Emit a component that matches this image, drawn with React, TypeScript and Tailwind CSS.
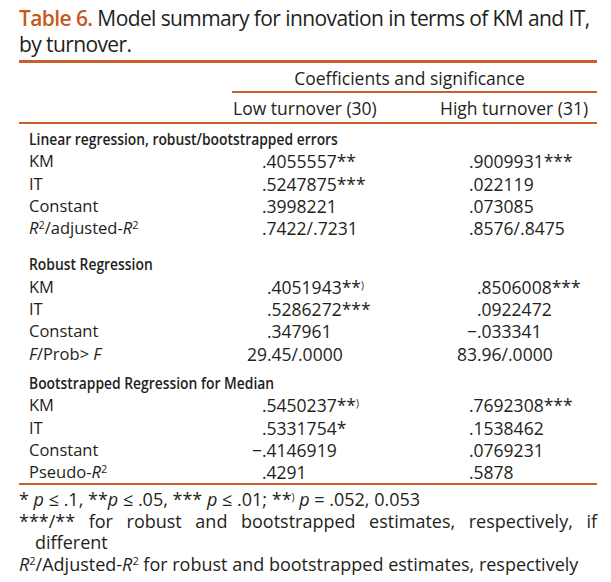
const ORANGE = "text-[#c65a1e]";

type Val = { int?: string; num: string; stars?: string; paren?: boolean };
type Row = { label: React.ReactNode; low: Val; high: Val };
type Section = { title: string; mt: string; lowOff: string; highOff: string; rows: Row[] };

function Sq() {
  return <sup className="text-[11px]">2</sup>;
}

function RSq({ adj }: { adj?: string }) {
  return (
    <>
      <i>R</i>
      <Sq />
      {adj !== undefined && (
        <>
          {adj}
          <i>R</i>
          <Sq />
        </>
      )}
    </>
  );
}

const sections: Section[] = [
  {
    title: "Linear regression, robust/bootstrapped errors",
    mt: "mt-[3px]",
    lowOff: "w-[30px]",
    highOff: "w-[30px]",
    rows: [
      { label: "KM", low: { num: ".4055557", stars: "**" }, high: { num: ".9009931", stars: "***" } },
      { label: "IT", low: { num: ".5247875", stars: "***" }, high: { num: ".022119" } },
      { label: "Constant", low: { num: ".3998221" }, high: { num: ".073085" } },
      { label: <RSq adj="/adjusted-" />, low: { num: ".7422/.7231" }, high: { num: ".8576/.8475" } },
    ],
  },
  {
    title: "Robust Regression",
    mt: "mt-[14px]",
    lowOff: "w-[35px]",
    highOff: "w-[38px]",
    rows: [
      { label: "KM", low: { num: ".4051943", stars: "**", paren: true }, high: { num: ".8506008", stars: "***" } },
      { label: "IT", low: { num: ".5286272", stars: "***" }, high: { num: ".0922472" } },
      { label: "Constant", low: { num: ".347961" }, high: { int: "−", num: ".033341" } },
      {
        label: (
          <>
            <i>F</i>/Prob&gt; <i>F</i>
          </>
        ),
        low: { int: "29", num: ".45/.0000" },
        high: { int: "83", num: ".96/.0000" },
      },
    ],
  },
  {
    title: "Bootstrapped Regression for Median",
    mt: "mt-[7px]",
    lowOff: "w-[30px]",
    highOff: "w-[30px]",
    rows: [
      { label: "KM", low: { num: ".5450237", stars: "**", paren: true }, high: { num: ".7692308", stars: "***" } },
      { label: "IT", low: { num: ".5331754", stars: "*" }, high: { num: ".1538462" } },
      { label: "Constant", low: { int: "−", num: ".4146919" }, high: { num: ".0769231" } },
      {
        label: (
          <>
            Pseudo-<RSq />
          </>
        ),
        low: { num: ".4291" },
        high: { num: ".5878" },
      },
    ],
  },
];

function Cell({ v, off }: { v: Val; off: string }) {
  return (
    <div className="flex text-[17.5px]">
      <span className={`${off} text-right`}>{v.int}</span>
      <span>
        {v.num}
        {v.stars}
        {v.paren && <sup className="text-[10px]">)</sup>}
      </span>
    </div>
  );
}

export default function App() {
  return (
    <div
      className="w-[611px] h-[582px] bg-white text-[#231f20] pl-[19px] pr-[14px] overflow-hidden"
      style={{ fontFamily: '"Open Sans", "Noto Sans", sans-serif' }}
    >
      <h1 className="pt-[5px] text-[21px] leading-[26px] font-normal tracking-[-0.6px]">
        <div className="whitespace-nowrap">
          <span className={`${ORANGE} font-semibold`}>Table 6.</span> Model summary for innovation in terms of KM and IT,
        </div>
        <div>by turnover.</div>
      </h1>
      <div className="mt-[3px] h-[3px] bg-[#c8602a]" />

      <div className="text-[16.5px]">
        <div className="ml-[213px] text-[17.5px]">
          <div className="pt-[3px] leading-[25px] text-center pr-[10px]">Coefficients and significance</div>
          <div className="h-[2px] bg-[#c8602a]" />
          <div className="pt-[2px] leading-[27px] grid grid-cols-[207px_1fr]">
            <div className="pl-[1px]">Low turnover (30)</div>
            <div className="pl-[1px]">High turnover (31)</div>
          </div>
        </div>
        <div className="h-[2px] bg-[#c8602a]" />

        <div className="pt-[1px] leading-[22.3px]">
          {sections.map((s) => (
            <div key={s.title} className={s.mt}>
              <div className="pl-[10px]">
                <span className="inline-block font-semibold origin-left scale-x-[0.84] whitespace-nowrap">{s.title}</span>
              </div>
              {s.rows.map((r, i) => (
                <div key={i} className="grid grid-cols-[213px_207px_1fr]">
                  <div className="pl-[10px]">{r.label}</div>
                  <Cell v={r.low} off={s.lowOff} />
                  <Cell v={r.high} off={s.highOff} />
                </div>
              ))}
            </div>
          ))}
        </div>
        <div className="h-[2px] bg-[#c8602a]" />

        <div className="leading-[21.5px] pt-[4px] text-[18px]">
          <div>
            * <i>p</i> ≤ .1, **<i>p</i> ≤ .05, *** <i>p</i> ≤ .01; **
            <sup className="text-[10px]">)</sup> <i>p</i> = .052, 0.053
          </div>
          <div className="text-justify [text-align-last:justify]">
            ***/** for robust and bootstrapped estimates, respectively, if
          </div>
          <div className="pl-[16px]">different</div>
          <div className="whitespace-nowrap">
            <RSq adj="/Adjusted-" /> for robust and bootstrapped estimates, respectively
          </div>
        </div>
      </div>
    </div>
  );
}
